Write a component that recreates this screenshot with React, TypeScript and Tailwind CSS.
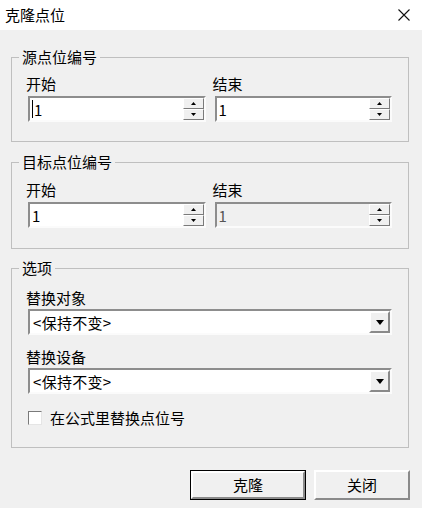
import React from "react";

const font = { fontFamily: '"Noto Sans CJK SC", "Noto Sans", sans-serif' };

function Group({ title, className, children }: { title: string; className?: string; children: React.ReactNode }) {
  return (
    <div className={`relative ml-[11px] w-[398px] border border-[#bfbfbf] px-[16px] ${className ?? ""}`}>
      <span className="absolute -top-[11px] left-[7px] bg-[#f0f0f0] px-[3px] text-[15px] leading-5 text-black">
        {title}
      </span>
      {children}
    </div>
  );
}

function Label({ children, className }: { children: React.ReactNode; className?: string }) {
  return <div className={`-ml-[2px] h-5 text-[15px] leading-5 text-black ${className ?? ""}`}>{children}</div>;
}

function SpinBtn({ up }: { up?: boolean }) {
  return (
    <div className="flex h-[11px] items-center justify-center border border-t-white border-l-white border-b-[#7a7a7a] border-r-[#7a7a7a] bg-[#f0f0f0]">
      <svg width="5" height="3" viewBox="0 0 5 3">
        {up ? <path d="M2.5 0 L5 3 L0 3 Z" fill="#000" /> : <path d="M0 0 L5 0 L2.5 3 Z" fill="#000" />}
      </svg>
    </div>
  );
}

function Spin({ disabled, caret }: { disabled?: boolean; caret?: boolean }) {
  return (
    <div
      className={`flex h-[26px] border-2 border-t-[#8d8d8d] border-l-[#8d8d8d] border-b-[#fbfbfb] border-r-[#fbfbfb] ${
        disabled ? "bg-[#f0f0f0]" : "bg-white"
      }`}
    >
      <div className={`flex flex-1 items-center pl-[2px] text-[15px] leading-none ${disabled ? "text-[#555555]" : "text-black"}`}>
        {caret && <span className="mr-[1px] inline-block h-[18px] w-[1px] bg-black" />}
        1
      </div>
      <div className="flex w-[21px] flex-col">
        <SpinBtn up />
        <SpinBtn />
      </div>
    </div>
  );
}

function Select() {
  return (
    <div className="flex h-[26px] border-2 border-t-[#8d8d8d] border-l-[#8d8d8d] border-b-[#fbfbfb] border-r-[#fbfbfb] bg-white">
      <div className="flex flex-1 items-center pl-[3px] text-[15px] leading-none tracking-[0.3px] text-black">&lt;保持不变&gt;</div>
      <div className="flex w-[21px] items-center justify-center border-2 border-t-white border-l-white border-b-[#8a8a8a] border-r-[#8a8a8a] bg-[#f0f0f0]">
        <svg width="8" height="5" viewBox="0 0 8 5">
          <path d="M0 0 L8 0 L4 5 Z" fill="#000" />
        </svg>
      </div>
    </div>
  );
}

function Pair({ disabledEnd, caret }: { disabledEnd?: boolean; caret?: boolean }) {
  return (
    <div className="grid grid-cols-2 gap-x-[9px]">
      <div>
        <Label>开始</Label>
        <div className="mt-[2px]">
          <Spin caret={caret} />
        </div>
      </div>
      <div>
        <Label>结束</Label>
        <div className="mt-[2px]">
          <Spin disabled={disabledEnd} />
        </div>
      </div>
    </div>
  );
}

export default function App() {
  return (
    <div className="flex h-[508px] w-[422px] flex-col bg-[#f0f0f0]" style={font}>
      <div className="flex h-[30px] items-center justify-between bg-white pl-[5px] pr-[12px]">
        <span className="text-[15px] leading-5 text-black">克隆点位</span>
        <svg width="12" height="12" viewBox="0 0 12 12">
          <path d="M0.5 0.5 L11.5 11.5 M11.5 0.5 L0.5 11.5" stroke="#111" strokeWidth="1.1" />
        </svg>
      </div>

      <Group title="源点位编号" className="mt-[27px] pt-[16px] pb-[19px]">
        <Pair caret />
      </Group>

      <Group title="目标点位编号" className="mt-[20px] pt-[17px] pb-[20px]">
        <Pair disabledEnd />
      </Group>

      <Group title="选项" className="mt-[19px] pt-[19px] pb-[19px]">
        <Label>替换对象</Label>
        <div className="mt-[1px]">
          <Select />
        </div>
        <Label className="mt-[12px]">替换设备</Label>
        <div className="mt-[1px]">
          <Select />
        </div>
        <div className="mt-[14px] flex h-5 items-center gap-[8px]">
          <span className="h-[14px] w-[14px] border border-t-[#7a7a7a] border-l-[#7a7a7a] border-b-[#e5e5e5] border-r-[#e5e5e5] bg-white" />
          <span className="text-[15px] leading-5 text-black">在公式里替换点位号</span>
        </div>
      </Group>

      <div className="mt-[22px] flex justify-end gap-[8px] pr-[12px]">
        <button className="h-[30px] w-[116px] border border-black p-0">
          <div className="flex h-full w-full items-center justify-center border-2 border-t-white border-l-white border-b-[#8a8a8a] border-r-[#8a8a8a] bg-[#f0f0f0] text-[15px] text-black">
            克隆
          </div>
        </button>
        <button className="flex h-[30px] w-[96px] items-center justify-center border-2 border-t-white border-l-white border-b-[#8a8a8a] border-r-[#8a8a8a] bg-[#f0f0f0] text-[15px] text-black">
          关闭
        </button>
      </div>
    </div>
  );
}
